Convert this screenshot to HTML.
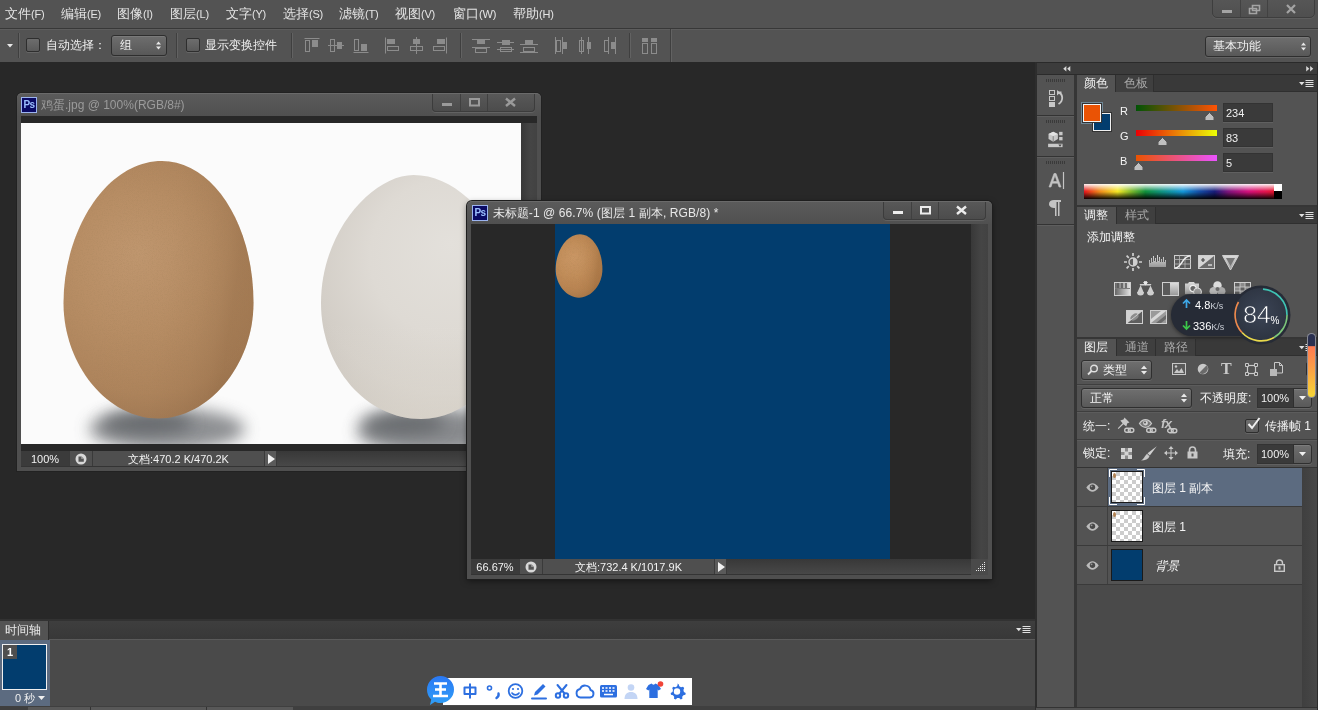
<!DOCTYPE html>
<html lang="zh">
<head>
<meta charset="utf-8">
<title>Photoshop</title>
<style>
*{box-sizing:border-box;margin:0;padding:0}
html,body{width:1318px;height:710px;overflow:hidden;background:#282828}
body{opacity:0.999;position:relative;font-family:"Liberation Sans",sans-serif;font-size:12px;color:#e6e6e6;line-height:1}
.a{position:absolute}
.t{position:absolute;white-space:nowrap;line-height:14px;height:14px}
svg{position:absolute;overflow:visible}
/* menubar */
#menubar{left:0;top:0;width:1318px;height:28px;background:#535353}
#menubar .t{top:7px;font-size:13px;color:#e4e4e4}
#menubar i{font-style:normal;font-size:11px;letter-spacing:-0.2px}
#optbar{left:0;top:28px;width:1318px;height:34px;background:#535353;border-top:1px solid #383838;box-shadow:inset 0 1px 0 #5d5d5d}
#optbar .t{font-size:12px;color:#f0f0f0}
.ic{fill:#8c8c8c;stroke:none}
.il{fill:none;stroke:#8c8c8c;stroke-width:1}
.sep{position:absolute;width:2px;top:6px;height:24px;border-left:1px solid #3f3f3f;border-right:1px solid #626262}
.cb{position:absolute;width:14px;height:14px;border:1px solid #2e2e2e;border-radius:2px;background:linear-gradient(#6d6d6d,#5a5a5a);box-shadow:0 1px 0 #666}
.dd{position:absolute;border:1px solid #2e2e2e;border-radius:3px;background:linear-gradient(#6e6e6e,#585858);box-shadow:0 1px 0 #636363, inset 0 1px 0 #7a7a7a}
/* doc windows */
.ps{position:absolute;left:4px;top:3px;width:16px;height:16px;background:#0a0a64;border:1px solid #9cb4f0;color:#9cc0ff;font-size:10px;font-weight:bold;line-height:13px;text-align:center;letter-spacing:-0.5px}
.field{position:absolute;background:#3a3a3a;border:1px solid #303030}
.panelhdr{position:absolute;background:#3a3a3a;border-top:1px solid #2a2a2a;border-bottom:1px solid #2e2e2e}
.tab{position:absolute;top:0;height:100%;font-size:12px}

.win{position:absolute;width:524px;height:378px;background:#4f4f4f;border-radius:5px 5px 0 0;box-shadow:0 0 0 1px rgba(30,30,30,.55)}
.wtitle{position:absolute;left:0;top:0;width:524px;height:23px;border-radius:5px 5px 0 0;background:linear-gradient(#5b5b5b,#505050);border-top:1px solid #6a6a6a}
.wtitle .t{left:24px;top:4px;font-size:12px}
.winner{position:absolute;left:4px;top:23px;width:516px;height:351px;background:#282828;overflow:hidden}
#win2 .stat{width:517px}
#win2 .wtitle .wbtn,#win2 .wtitle>.a,#win2 .wtitle>svg{margin-left:1px}
.vsb{position:absolute;left:500px;top:0;width:16px;height:335px;background:linear-gradient(90deg,#383838,#454545 60%,#424242)}
.stat{position:absolute;left:0;top:335px;width:516px;height:16px;background:linear-gradient(#383838,#484848);border-bottom:1px solid #343434}
.stat .d{position:absolute;left:72px;top:0;width:171px;height:15px;background:#4f4f4f}
.stat .t{top:1px;z-index:1;font-size:11px;color:#f2f2f2;text-align:center}
.stat .z{position:absolute;left:0;top:0;width:48px;height:15px;background:#3b3b3b}
.stat .b1{position:absolute;left:48px;top:0;width:24px;height:15px;background:#505050;border-left:1px solid #3a3a3a;border-right:1px solid #3a3a3a}
.stat .b2{position:absolute;left:243px;top:0;width:13px;height:15px;background:#5a5a5a;border-left:1px solid #3a3a3a;border-right:1px solid #3a3a3a}
.wbtn{position:absolute;top:0;height:18px;border:1px solid #3c3c3c;border-top:none;border-radius:0 0 4px 4px;background:linear-gradient(#585858,#4c4c4c);box-shadow:0 1px 0 #626262}

.pn{position:absolute;left:1077px;width:241px;background:#535353}
.tb{position:absolute;left:1077px;width:241px;height:17px;background:#393939;border-bottom:1px solid #2f2f2f}
.tb .on{position:absolute;top:0;height:18px;background:#535353;border-right:1px solid #2f2f2f;color:#f0f0f0;font-size:12px;line-height:16px;padding-left:7px}
.tb .off{position:absolute;top:0;height:17px;background:#3f3f3f;border-right:1px solid #2f2f2f;color:#a8a8a8;font-size:12px;line-height:16px;padding-left:8px}
.tb svg{left:222px;top:5px}
.grip{position:absolute;left:1046px;width:20px;height:3px;background:repeating-linear-gradient(90deg,#3a3a3a 0 1px,transparent 1px 2px)}
.hl{position:absolute;height:1px;background:#3e3e3e;box-shadow:0 1px 0 #5c5c5c}
.pt{position:absolute;white-space:nowrap;font-size:12px;line-height:14px;color:#f4f4f4}
.nf{position:absolute;background:#3a3a3a;border:1px solid #333;box-shadow:0 1px 0 #606060;color:#f0f0f0;font-size:11px;line-height:19px;padding-left:2px}

.dd2{position:absolute;border:1px solid #2f2f2f;border-radius:3px;background:linear-gradient(#6f6f6f,#595959);box-shadow:0 1px 0 #656565, inset 0 1px 0 #7c7c7c}
.lrow{position:absolute;left:1077px;width:225px;height:39px;background:#535353;border-bottom:1px solid #3a3a3a}
.lrow .eyec{position:absolute;left:0;top:0;width:31px;height:38px;border-right:1px solid #3f3f3f;background:#535353}
.thumb{position:absolute;left:34px;top:3px;width:32px;height:32px;border:1px solid #1a1a1a;background-color:#fff;background-image:linear-gradient(45deg,#ccc 25%,transparent 25%,transparent 75%,#ccc 75%),linear-gradient(45deg,#ccc 25%,transparent 25%,transparent 75%,#ccc 75%);background-size:8px 8px;background-position:0 0,4px 4px}
</style>
</head>
<body>

<!-- ===== MENU BAR ===== -->
<div id="menubar" class="a">
  <span class="t" style="left:5px">文件<i>(F)</i></span>
  <span class="t" style="left:61px">编辑<i>(E)</i></span>
  <span class="t" style="left:117px">图像<i>(I)</i></span>
  <span class="t" style="left:170px">图层<i>(L)</i></span>
  <span class="t" style="left:226px">文字<i>(Y)</i></span>
  <span class="t" style="left:283px">选择<i>(S)</i></span>
  <span class="t" style="left:339px">滤镜<i>(T)</i></span>
  <span class="t" style="left:395px">视图<i>(V)</i></span>
  <span class="t" style="left:453px">窗口<i>(W)</i></span>
  <span class="t" style="left:513px">帮助<i>(H)</i></span>

  <div class="a" style="left:1212px;top:-1px;width:103px;height:19px;border:1px solid #3e3e3e;border-radius:0 0 5px 5px;background:linear-gradient(#565656,#4f4f4f);box-shadow:0 1px 0 #5e5e5e"></div>
  <div class="a" style="left:1240px;top:0;width:1px;height:17px;background:#424242"></div>
  <div class="a" style="left:1267px;top:0;width:1px;height:17px;background:#424242"></div>
  <svg style="left:1212px;top:0" width="103" height="18" viewBox="0 0 103 18">
    <rect x="10" y="10" width="10" height="3" fill="#a4a4a4"/>
    <path d="M40.5 5.5h7v5h-7z M37.5 8.5h7v5h-7z" fill="none" stroke="#a4a4a4" stroke-width="1.6"/>
    <path d="M75 5l8 8M83 5l-8 8" stroke="#a4a4a4" stroke-width="2.2" fill="none"/>
  </svg>
</div>

<!-- ===== OPTIONS BAR ===== -->
<div id="optbar" class="a">
  <svg style="left:7px;top:15px" width="6" height="4" viewBox="0 0 6 4"><path d="M0 0h6l-3 3.500z" fill="#e8e8e8"/></svg>
  <div class="sep" style="left:18px;top:4px;height:25px"></div>
  <div class="cb" style="left:26px;top:9px"></div>
  <span class="t" style="left:46px;top:9px">自动选择：</span>
  <div class="dd" style="left:111px;top:6px;width:56px;height:21px"></div>
  <span class="t" style="left:120px;top:9px">组</span>
  <svg style="left:156px;top:12px" width="5" height="9" viewBox="0 0 5 9"><path d="M0 3.500l2.500-3 2.500 3zM0 5.500l2.500 3 2.500-3z" fill="#e8e8e8"/></svg>
  <div class="sep" style="left:176px;top:4px;height:25px"></div>
  <div class="cb" style="left:186px;top:9px"></div>
  <span class="t" style="left:205px;top:9px">显示变换控件</span>
  <div class="sep" style="left:291px;top:4px;height:25px"></div>
  <svg style="left:304px;top:8px" width="18" height="18" viewBox="0 0 18 18"><path class="il" d="M0.5 1.5h15"/><rect class="il" x="1.5" y="3.5" width="4" height="11"/><rect class="ic" x="8" y="3" width="6" height="7"/></svg>
  <svg style="left:328px;top:8px" width="18" height="18" viewBox="0 0 18 18"><path class="il" d="M0 8.5h16"/><rect class="il" x="2.5" y="2.5" width="4" height="12" fill="#535353"/><rect class="ic" x="9" y="5" width="5" height="7"/></svg>
  <svg style="left:353px;top:8px" width="18" height="18" viewBox="0 0 18 18"><path class="il" d="M0.5 15.5h15"/><rect class="il" x="1.5" y="2.5" width="4" height="11"/><rect class="ic" x="8" y="7" width="6" height="7"/></svg>
  <svg style="left:384px;top:8px" width="18" height="18" viewBox="0 0 18 18"><path class="il" d="M1.5 0.5v16"/><rect class="ic" x="3" y="2" width="8" height="5"/><rect class="il" x="3.5" y="9.5" width="11" height="4"/></svg>
  <svg style="left:409px;top:8px" width="18" height="18" viewBox="0 0 18 18"><path class="il" d="M7.5 0v17"/><rect class="ic" x="4" y="2" width="7" height="5"/><rect class="il" x="1.5" y="9.5" width="12" height="4" fill="#535353"/></svg>
  <svg style="left:432px;top:8px" width="18" height="18" viewBox="0 0 18 18"><path class="il" d="M14.5 0.5v16"/><rect class="ic" x="5" y="2" width="8" height="5"/><rect class="il" x="1.5" y="9.5" width="11" height="4"/></svg>
  <svg style="left:472px;top:8px" width="18" height="18" viewBox="0 0 18 18"><path class="il" d="M0 2.5h18M0 10.5h18"/><rect class="ic" x="5" y="3" width="8" height="4"/><rect class="il" x="3.5" y="11.5" width="11" height="4"/></svg>
  <svg style="left:497px;top:8px" width="18" height="18" viewBox="0 0 18 18"><path class="il" d="M0 5.5h17M0 12.5h17"/><rect class="ic" x="5" y="3" width="8" height="5"/><rect class="il" x="3.5" y="10.5" width="11" height="4" fill="#535353"/></svg>
  <svg style="left:520px;top:8px" width="18" height="18" viewBox="0 0 18 18"><path class="il" d="M0 7.5h18M0 15.5h18"/><rect class="ic" x="5" y="3" width="8" height="4"/><rect class="il" x="3.5" y="10.5" width="11" height="4"/></svg>
  <svg style="left:553px;top:8px" width="18" height="18" viewBox="0 0 18 18"><path class="il" d="M2.5 0v17M9.5 0v17"/><rect class="il" x="3.5" y="3.5" width="4" height="11"/><rect class="ic" x="10" y="5" width="4" height="7"/></svg>
  <svg style="left:577px;top:8px" width="18" height="18" viewBox="0 0 18 18"><path class="il" d="M4.5 0v17M11.5 0v17"/><rect class="il" x="2.5" y="3.5" width="4" height="11" fill="#535353"/><rect class="ic" x="10" y="5" width="4" height="7"/></svg>
  <svg style="left:601px;top:8px" width="18" height="18" viewBox="0 0 18 18"><path class="il" d="M7.5 0v17M14.5 0v17"/><rect class="il" x="3.5" y="3.5" width="4" height="11"/><rect class="ic" x="10" y="5" width="4" height="7"/></svg>
  <svg style="left:641px;top:8px" width="18" height="18" viewBox="0 0 18 18"><rect class="ic" x="1" y="1" width="6" height="4"/><rect class="ic" x="10" y="1" width="6" height="4"/><rect class="il" x="1.5" y="6.5" width="5" height="10"/><rect class="il" x="10.5" y="6.5" width="5" height="10"/></svg>
  <div class="sep" style="left:460px;top:4px;height:25px"></div>
  <div class="sep" style="left:629px;top:4px;height:25px"></div>
  <div class="sep" style="left:670px;top:0;height:33px"></div>
  <div class="dd" style="left:1205px;top:7px;width:106px;height:21px"></div>
  <span class="t" style="left:1213px;top:10px">基本功能</span>
  <svg style="left:1301px;top:13px" width="5" height="9" viewBox="0 0 5 9"><path d="M0 3.500l2.500-3 2.500 3zM0 5.500l2.500 3 2.500-3z" fill="#e8e8e8"/></svg>
</div>

<!-- ===== WORKSPACE ===== -->
<div id="work" class="a" style="left:0;top:62px;width:1035px;height:558px;background:#282828"></div>

<!-- ===== WINDOW 1 ===== -->
<div id="win1" class="win" style="left:17px;top:93px">
  <div class="wtitle"><div class="ps">Ps</div><span class="t" style="color:#9b9b9b">鸡蛋.jpg @ 100%(RGB/8#)</span>
    <div class="wbtn" style="left:415px;width:103px"></div>
    <div class="a" style="left:443px;top:0;width:1px;height:17px;background:#404040"></div>
    <div class="a" style="left:470px;top:0;width:1px;height:17px;background:#404040"></div>
    <svg style="left:416px;top:0" width="102" height="19" viewBox="0 0 102 19">
      <rect x="9" y="9" width="10" height="3" fill="#9a9a9a"/>
      <rect x="37" y="5" width="9" height="6.500" fill="none" stroke="#9a9a9a" stroke-width="2"/>
      <path d="M73 4.500l9 7.500M82 4.500l-9 7.500" stroke="#9a9a9a" stroke-width="2.400" fill="none"/>
    </svg>
  </div>
  <div class="winner">
    <svg style="left:0;top:7px" width="500" height="321" viewBox="0 0 500 321">
      <defs>
        <radialGradient id="gBrown" gradientUnits="userSpaceOnUse" cx="130" cy="155" r="170" fx="118" fy="130">
          <stop offset="0" stop-color="#c0976f"/><stop offset="0.4" stop-color="#b88e65"/><stop offset="0.72" stop-color="#ae845c"/><stop offset="0.9" stop-color="#a07853"/><stop offset="1" stop-color="#906a47"/>
        </radialGradient>
        <linearGradient id="gBrownB" gradientUnits="userSpaceOnUse" x1="100" y1="0" x2="236" y2="20">
          <stop offset="0" stop-color="#6a4524" stop-opacity="0"/><stop offset="0.5" stop-color="#6a4524" stop-opacity="0.02"/><stop offset="0.75" stop-color="#6a4524" stop-opacity="0.07"/><stop offset="0.9" stop-color="#6a4524" stop-opacity="0.13"/><stop offset="1" stop-color="#6a4524" stop-opacity="0.2"/>
        </linearGradient>
        <radialGradient id="gWhite" gradientUnits="userSpaceOnUse" cx="420" cy="150" r="170" fx="430" fy="120">
          <stop offset="0" stop-color="#e3e0db"/><stop offset="0.45" stop-color="#dedad4"/><stop offset="0.75" stop-color="#d3cec7"/><stop offset="1" stop-color="#c3bdb5"/>
        </radialGradient>
        <linearGradient id="gWhiteB" gradientUnits="userSpaceOnUse" x1="0" y1="200" x2="0" y2="300">
          <stop offset="0" stop-color="#e8e4dc" stop-opacity="0"/><stop offset="1" stop-color="#efeadf" stop-opacity="0.35"/>
        </linearGradient>
        <filter id="blur8" x="-40%" y="-100%" width="180%" height="300%"><feGaussianBlur stdDeviation="8"/></filter>
        <filter id="blur4" x="-40%" y="-100%" width="180%" height="300%"><feGaussianBlur stdDeviation="4"/></filter>
        <filter id="soft" x="-5%" y="-5%" width="110%" height="110%"><feGaussianBlur stdDeviation="0.6"/></filter>
        <filter id="speck" x="0" y="0" width="100%" height="100%">
          <feTurbulence type="fractalNoise" baseFrequency="0.8" numOctaves="2" seed="3" result="n"/>
          <feColorMatrix in="n" type="matrix" values="0 0 0 0 0.35  0 0 0 0 0.22  0 0 0 0 0.10  0 0 0 -1.8 1.0"/>
          <feComposite in2="SourceGraphic" operator="in"/>
        </filter>
        <path id="eggB" d="M141 38 C191 38 232.5 100 232.5 180 C232.5 242.500 187 295.500 137 295.500 C87 295.500 42.5 242.500 42.5 180 C42.5 108 85 38 141 38Z"/>
        <g id="brownEgg">
          <use href="#eggB" fill="url(#gBrown)"/>
          <use href="#eggB" fill="url(#gBrownB)"/>
          <use href="#eggB" fill="#000" filter="url(#speck)" opacity="0.3"/>
        </g>
        <path id="eggW" d="M392.5 52 C445 52 492 115 492 182 C492 245 452 296 400 296 C346 296 300 245 300 180 C300 108 352 52 392.5 52Z"/>
      </defs>
      <rect width="500" height="321" fill="#fbfbfb"/>
      <g style="overflow:hidden"><clipPath id="cv1"><rect width="500" height="321"/></clipPath></g>
      <g clip-path="url(#cv1)">
        <ellipse cx="146" cy="306" rx="78" ry="21" fill="#707276" opacity="0.78" filter="url(#blur8)"/>
        <ellipse cx="126" cy="300" rx="46" ry="12" fill="#505256" opacity="0.6" filter="url(#blur8)"/>
        <ellipse cx="412" cy="308" rx="76" ry="23" fill="#707276" opacity="0.82" filter="url(#blur8)"/>
        <ellipse cx="382" cy="300" rx="42" ry="12" fill="#505256" opacity="0.55" filter="url(#blur8)"/>
        <use href="#brownEgg"/>
        <use href="#eggW" fill="url(#gWhite)"/>
        <use href="#eggW" fill="url(#gWhiteB)"/>
      </g>
    </svg>
    <div class="vsb" style="top:7px;height:328px"></div>
    <div class="stat">
      <div class="z"></div><span class="t" style="left:0;width:48px">100%</span>
      <div class="b1"></div><div class="d"></div>
      <svg style="left:54px;top:2px" width="12" height="12" viewBox="0 0 12 12"><circle cx="6" cy="6" r="5.5" fill="#d8d8d8"/><path d="M3.5 3.5h3v2.2h2.3v3H3.5z" fill="#555"/><path d="M6.5 3.2l2.6 2.5H6.5z" fill="#888"/></svg>
      <span class="t" style="left:72px;width:171px">文档:470.2 K/470.2K</span>
      <div class="b2"></div>
      <svg style="left:247px;top:3px" width="7" height="10" viewBox="0 0 7 10"><path d="M0 0l7 5-7 5z" fill="#f0f0f0"/></svg>
    </div>
  </div>
</div>

<!-- ===== WINDOW 2 ===== -->
<div id="win2" class="win" style="left:467px;top:201px;width:525px;box-shadow:0 0 0 1px #1e1e1e,0 2px 6px rgba(0,0,0,.5)">
  <div class="wtitle" style="width:525px"><div class="ps" style="left:5px">Ps</div><span class="t" style="color:#e8e8e8;left:25.5px;letter-spacing:0.1px">未标题-1 @ 66.7% (图层 1 副本, RGB/8) *</span>
    <div class="wbtn" style="left:415px;width:103px"></div>
    <div class="a" style="left:443px;top:0;width:1px;height:17px;background:#404040"></div>
    <div class="a" style="left:470px;top:0;width:1px;height:17px;background:#404040"></div>
    <svg style="left:416px;top:0" width="102" height="19" viewBox="0 0 102 19">
      <rect x="9" y="9" width="10" height="3" fill="#ececec"/>
      <rect x="37" y="5" width="9" height="6.500" fill="none" stroke="#ececec" stroke-width="2"/>
      <path d="M73 4.500l9 7.500M82 4.500l-9 7.500" stroke="#ececec" stroke-width="2.400" fill="none"/>
    </svg>
  </div>
  <div class="winner" style="width:517px">
    <div class="a" style="left:84px;top:0;width:335px;height:335px;background:#023d6e"></div>
    <svg style="left:73.500px;top:1px;filter:saturate(1.180) contrast(1.060)" width="70" height="74.500" viewBox="0 0 283 303"><use href="#brownEgg"/></svg>
    <div class="vsb" style="left:500px;width:17px"></div>
    <div class="a" style="left:500px;top:335px;width:17px;height:16px;background:#4a4a4a;z-index:2"></div><div style="position:absolute;left:0;top:0;z-index:3"><svg style="left:505px;top:338px" width="11" height="11" viewBox="0 0 11 11"><g fill="#e8e8e8"><rect x="8" y="0" width="1" height="1"/><rect x="6" y="2" width="1" height="1"/><rect x="8" y="2" width="1" height="1"/><rect x="4" y="4" width="1" height="1"/><rect x="6" y="4" width="1" height="1"/><rect x="8" y="4" width="1" height="1"/><rect x="2" y="6" width="1" height="1"/><rect x="4" y="6" width="1" height="1"/><rect x="6" y="6" width="1" height="1"/><rect x="8" y="6" width="1" height="1"/><rect x="0" y="8" width="1" height="1"/><rect x="2" y="8" width="1" height="1"/><rect x="4" y="8" width="1" height="1"/><rect x="6" y="8" width="1" height="1"/><rect x="8" y="8" width="1" height="1"/></g></svg></div>
    <div class="stat">
      <div class="z"></div><span class="t" style="left:0;width:48px">66.67%</span>
      <div class="b1"></div><div class="d"></div>
      <svg style="left:54px;top:2px" width="12" height="12" viewBox="0 0 12 12"><circle cx="6" cy="6" r="5.5" fill="#d8d8d8"/><path d="M3.5 3.5h3v2.2h2.3v3H3.5z" fill="#555"/><path d="M6.5 3.2l2.6 2.5H6.5z" fill="#888"/></svg>
      <span class="t" style="left:72px;width:171px">文档:732.4 K/1017.9K</span>
      <div class="b2"></div>
      <svg style="left:247px;top:3px" width="7" height="10" viewBox="0 0 7 10"><path d="M0 0l7 5-7 5z" fill="#f0f0f0"/></svg>
    </div>
  </div>
</div>

<!-- ===== RIGHT DOCK ===== -->
<div id="dock" class="a" style="left:1035px;top:62px;width:283px;height:648px;background:#363636;border-left:2px solid #2d2d2d;border-top:1px solid #2a2a2a"></div>
<!-- dock header -->
<div class="a" style="left:1037px;top:63px;width:281px;height:11px;background:#3c3c3c"></div>
<div class="a" style="left:1037px;top:74px;width:281px;height:1px;background:#2b2b2b"></div>
<svg style="left:1063px;top:66px" width="7.500" height="5.500" viewBox="0 0 9 7"><path d="M4 0v7L0 3.5zM9 0v7L5 3.5z" fill="#d8d8d8"/></svg>
<svg style="left:1306px;top:66px" width="7.500" height="5.500" viewBox="0 0 9 7"><path d="M0 0v7l4-3.500zM5 0v7l4-3.500z" fill="#d8d8d8"/></svg>
<!-- icon column -->
<div class="a" style="left:1037px;top:75px;width:37px;height:635px;background:#535353"></div>
<div class="a" style="left:1037px;top:115px;width:37px;height:1px;background:#333;box-shadow:0 1px 0 #5e5e5e"></div>
<div class="a" style="left:1037px;top:156px;width:37px;height:1px;background:#333;box-shadow:0 1px 0 #5e5e5e"></div>
<div class="a" style="left:1037px;top:224px;width:37px;height:1px;background:#333;box-shadow:0 1px 0 #5e5e5e"></div>
<div class="grip" style="top:79px"></div>
<div class="grip" style="top:120px"></div>
<div class="grip" style="top:161px"></div>
<!-- history icon -->
<svg style="left:1049px;top:89px" width="17" height="18" viewBox="0 0 17 18">
  <rect x="0.5" y="1.500" width="5" height="4" fill="none" stroke="#c8c8c8"/><rect x="0.5" y="7.500" width="5" height="4" fill="none" stroke="#c8c8c8"/><rect x="0" y="13" width="6" height="5" fill="#c8c8c8"/>
  <path d="M8.500 3.500h4 M9 3.500c5 1 6 8 0.500 11.500" fill="none" stroke="#c8c8c8" stroke-width="1.800"/><path d="M8 1v5.500l3-2.700z" fill="#c8c8c8"/>
</svg>
<!-- properties / 3d icon -->
<svg style="left:1048px;top:130.500px" width="15.500" height="17" viewBox="0 0 18 20">
  <path d="M6 1l5.500 2.500v6L6 12.500 0.500 9.500v-6z" fill="#c8c8c8"/><path d="M6 1l5.500 2.500L6 6 0.500 3.500z" fill="#e4e4e4"/><path d="M6 6v6.500" stroke="#777" stroke-width="1"/>
  <rect x="13" y="1" width="4" height="4" fill="#c8c8c8"/><rect x="13" y="7" width="4" height="4" fill="#c8c8c8"/>
  <rect x="0" y="15" width="17" height="4" fill="#c8c8c8"/><path d="M12 16h4l-2 2.500z" fill="#444"/>
</svg>
<!-- character icon -->
<svg style="left:1049px;top:172px" width="16" height="18" viewBox="0 0 16 18"><path d="M0 15L5 1.500h2L12 15h-2l-1.300-3.800H3.300L2 15zM3.900 9.500h4.200L6 3.500z" fill="#c4c4c4" stroke="#c4c4c4" stroke-width="0.600"/><path d="M14.500 0v17" stroke="#c4c4c4" stroke-width="1.200"/></svg>
<!-- paragraph icon -->
<svg style="left:1049px;top:200px" width="12" height="16" viewBox="0 0 12 16"><path d="M5 0h7v2h-1.500v14H9V2H7.500v14H6V8C2.500 8 0 6.500 0 4S2 0 5 0z" fill="#c4c4c4"/></svg>

<!-- COLOR PANEL -->
<div class="tb" style="top:75px"><div class="on" style="left:0;width:39px">颜色</div><div class="off" style="left:39px;width:38px">色板</div><svg width="15" height="8" viewBox="0 0 15 8"><path d="M0 2h5.500l-2.750 3.200z" fill="#e0e0e0"/><path d="M6.500 0.500h8M6.500 2.500h8M6.500 4.500h8M6.500 6.500h8" stroke="#e0e0e0" stroke-width="1"/></svg></div>
<div class="pn" style="top:92px;height:113px"></div>
<div class="a" style="left:1081px;top:102px;width:22px;height:22px;border:1px solid #6f8796"></div>
<div class="a" style="left:1093px;top:113px;width:18px;height:18px;background:#023d6e;border:1px solid #f0f0f0;box-shadow:0 0 0 1px #333"></div>
<div class="a" style="left:1083px;top:104px;width:18px;height:18px;background:#ea5305;border:1px solid #f4f4f4;box-shadow:0 0 0 1px #333"></div>
<span class="pt" style="left:1120px;top:104px;font-size:11px">R</span>
<span class="pt" style="left:1120px;top:129px;font-size:11px">G</span>
<span class="pt" style="left:1120px;top:154px;font-size:11px">B</span>
<div class="a" style="left:1136px;top:105px;width:81px;height:6px;background:linear-gradient(90deg,#005305,#ff5305)"></div>
<div class="a" style="left:1136px;top:130px;width:81px;height:6px;background:linear-gradient(90deg,#ea0005,#eaff05)"></div>
<div class="a" style="left:1136px;top:155px;width:81px;height:6px;background:linear-gradient(90deg,#ea5300,#ea53ff)"></div>
<svg style="left:1204px;top:112px" width="11" height="9" viewBox="0 0 11 9"><path d="M5.500 0.500L10 5v3.500H1V5z" fill="#c0c0c0" stroke="#555" stroke-width="1"/></svg>
<svg style="left:1157px;top:137px" width="11" height="9" viewBox="0 0 11 9"><path d="M5.500 0.500L10 5v3.500H1V5z" fill="#c0c0c0" stroke="#555" stroke-width="1"/></svg>
<svg style="left:1133px;top:162px" width="11" height="9" viewBox="0 0 11 9"><path d="M5.500 0.500L10 5v3.500H1V5z" fill="#c0c0c0" stroke="#555" stroke-width="1"/></svg>
<div class="nf" style="left:1223px;top:103px;width:50px;height:19px">234</div>
<div class="nf" style="left:1223px;top:128px;width:50px;height:19px">83</div>
<div class="nf" style="left:1223px;top:153px;width:50px;height:19px">5</div>
<div class="a" style="left:1084px;top:184px;width:198px;height:15px;background:linear-gradient(rgba(255,255,255,.95) 0,rgba(255,255,255,0) 48%,rgba(0,0,0,0) 52%,rgba(0,0,0,.95) 100%),linear-gradient(90deg,#e8141c 0,#f08c1c 8%,#f4e824 17%,#7cb82c 24%,#10903c 31%,#109488 40%,#1496d8 50%,#1450a8 58%,#181c78 66%,#80147c 73%,#d4107c 83%,#e4144c 92%,#e4141c 98%)"></div>
<div class="a" style="left:1274px;top:184px;width:8px;height:7px;background:#fff"></div>
<div class="a" style="left:1274px;top:191px;width:8px;height:8px;background:#000"></div>

<!-- ADJUSTMENTS PANEL -->
<div class="tb" style="top:207px"><div class="on" style="left:0;width:40px">调整</div><div class="off" style="left:40px;width:39px">样式</div><svg width="15" height="8" viewBox="0 0 15 8"><path d="M0 2h5.500l-2.750 3.200z" fill="#e0e0e0"/><path d="M6.500 0.500h8M6.500 2.500h8M6.500 4.500h8M6.500 6.500h8" stroke="#e0e0e0" stroke-width="1"/></svg></div>
<div class="pn" style="top:224px;height:113px"></div>
<span class="pt" style="left:1087px;top:230px">添加调整</span>

<svg width="0" height="0" style="left:0;top:0"><defs><linearGradient id="ag" x1="0" y1="0" x2="0" y2="1"><stop offset="0" stop-color="#dcdcdc"/><stop offset="1" stop-color="#9a9a9a"/></linearGradient><linearGradient id="agh" x1="0" y1="0" x2="1" y2="0"><stop offset="0" stop-color="#666"/><stop offset="1" stop-color="#e0e0e0"/></linearGradient></defs></svg>
<!-- row 1 -->
<svg style="left:1124px;top:253px" width="18" height="18" viewBox="0 0 18 18"><circle cx="9" cy="9" r="4" fill="#5c5c5c" stroke="#d0d0d0" stroke-width="1.4"/><path d="M9 5a4 4 0 0 1 0 8z" fill="#d0d0d0"/><path d="M9 0v3M9 15v3M0 9h3M15 9h3M2.600 2.600l2.200 2.200M13.200 13.200l2.200 2.200M2.600 15.400l2.200-2.200M13.200 4.800l2.200-2.200" stroke="#d0d0d0" stroke-width="1.700"/></svg>
<svg style="left:1149px;top:255px" width="18" height="13" viewBox="0 0 18 13"><path d="M0 12V5h1v3h1V3h1v4h1V1h1v5h1V3h1v4h1V0h1v6h1V2h1v5h1V4h1v3h1V2h1v5h1V5h1v7z" fill="url(#ag)"/></svg>
<svg style="left:1174px;top:255px" width="17" height="14" viewBox="0 0 17 14"><rect x="0.500" y="0.500" width="16" height="13" fill="#5a5a5a" stroke="#cfcfcf"/><path d="M0 4.500h17M0 9h17M5.500 0v14M11 0v14" stroke="#b8b8b8" stroke-width="0.800"/><path d="M1 13c7 0 7-12 15-12" fill="none" stroke="#f0f0f0" stroke-width="1.500"/></svg>
<svg style="left:1198px;top:255px" width="17" height="14" viewBox="0 0 17 14"><rect x="0.500" y="0.500" width="16" height="13" fill="#6a6a6a" stroke="#cfcfcf"/><path d="M1 1h15L1 13z" fill="#d4d4d4"/><path d="M3 5h4M5 3v4" stroke="#444" stroke-width="1.200"/><path d="M10 10h4" stroke="#eee" stroke-width="1.200"/></svg>
<svg style="left:1222px;top:255px" width="17" height="16" viewBox="0 0 17 16"><path d="M0.500 0.500h16L8.500 15z" fill="url(#ag)" stroke="#d0d0d0"/><path d="M4 3h9L8.500 11z" fill="#777"/></svg>
<!-- row 2 -->
<svg style="left:1114px;top:282px" width="17" height="14" viewBox="0 0 17 14"><rect x="0.500" y="0.500" width="16" height="13" fill="#7a7a7a" stroke="#cfcfcf"/><rect x="1" y="1" width="15" height="5" fill="url(#agh)"/><path d="M4 1v5M8 1v5M12 1v5" stroke="#555" stroke-width="1.500"/><rect x="1" y="7" width="15" height="6" fill="url(#agh)"/></svg>
<svg style="left:1136px;top:281px" width="19" height="16" viewBox="0 0 19 16"><path d="M8 0h3v3h4.500l-1 1.500L17.500 11h-6l3-6.500H4.800L7.500 11h-6l3-6.500-1-1.500H8z" fill="#cfcfcf"/><path d="M1 11h7a3.500 3.500 0 0 1-7 0zM11 11h7a3.500 3.500 0 0 1-7 0z" fill="#cfcfcf"/><path d="M7 1h5l-2.500 3.500z" fill="#e8e8e8"/></svg>
<svg style="left:1162px;top:282px" width="17" height="14" viewBox="0 0 17 14"><rect x="0.500" y="0.500" width="16" height="13" fill="#5a5a5a" stroke="#cfcfcf"/><rect x="8" y="1" width="8" height="12" fill="url(#ag)"/></svg>
<svg style="left:1185px;top:281px" width="17" height="15" viewBox="0 0 17 15"><path d="M0 2.500h3L4 1h5l1 1.500h4V13H0z" fill="url(#ag)"/><circle cx="8" cy="7.500" r="3.200" fill="#666" stroke="#eee" stroke-width="1.200"/><circle cx="12.500" cy="11" r="4" fill="#999" stroke="#ddd" stroke-width="1"/></svg>
<svg style="left:1209px;top:281px" width="17" height="15" viewBox="0 0 17 15"><circle cx="8.500" cy="4.500" r="4.200" fill="#dcdcdc"/><circle cx="4.700" cy="10.300" r="4.200" fill="#b8b8b8"/><circle cx="12.300" cy="10.300" r="4.200" fill="#a8a8a8"/><circle cx="8.500" cy="8" r="2" fill="#6a6a6a"/></svg>
<svg style="left:1234px;top:282px" width="17" height="14" viewBox="0 0 17 14"><rect x="0.500" y="0.500" width="16" height="13" fill="#8a8a8a" stroke="#cfcfcf"/><path d="M1 1h5v4H1zM11 1h5v4h-5zM6 5h5v4H6zM1 9h5v4H1zM11 9h5v4h-5z" fill="#606060"/><path d="M6 0v14M11 0v14M0 5h17M0 9h17" stroke="#cfcfcf" stroke-width="0.800"/></svg>
<!-- row 3 -->
<svg style="left:1126px;top:310px" width="17" height="14" viewBox="0 0 17 14"><rect x="0.500" y="0.500" width="16" height="13" fill="#d2d2d2" stroke="#cfcfcf"/><path d="M1 13L16 1V13z" fill="#5e5e5e"/><ellipse cx="8.500" cy="7" rx="4.500" ry="3" transform="rotate(-38 8.500 7)" fill="#8c8c8c"/><path d="M1 13L16 1" stroke="#ddd" stroke-width="0.800"/></svg>
<svg style="left:1150px;top:310px" width="17" height="14" viewBox="0 0 17 14"><rect x="0.500" y="0.500" width="16" height="13" fill="#9a9a9a" stroke="#cfcfcf"/><path d="M1 9L11 1h5L1 13z" fill="#d8d8d8"/><path d="M6 13L16 5v4l-5 4z" fill="#6a6a6a"/></svg>
<svg style="left:1174px;top:310px" width="17" height="14" viewBox="0 0 17 14"><rect x="0.500" y="0.500" width="16" height="13" fill="#5e5e5e" stroke="#cfcfcf"/><path d="M1 13V9h5V5h5V1h5v12z" fill="#d0d0d0"/></svg>
<svg style="left:1198px;top:310px" width="17" height="14" viewBox="0 0 17 14"><rect x="0.500" y="0.500" width="16" height="13" fill="url(#agh)" stroke="#cfcfcf"/></svg>
<svg style="left:1222px;top:310px" width="17" height="14" viewBox="0 0 17 14"><rect x="0.500" y="0.500" width="16" height="13" fill="#6a6a6a" stroke="#cfcfcf"/><path d="M1 1h15L1 13z" fill="#ccc"/></svg>

<!-- LAYERS PANEL -->
<div class="tb" style="top:339px"><div class="on" style="left:0;width:40px">图层</div><div class="off" style="left:40px;width:39px">通道</div><div class="off" style="left:79px;width:40px">路径</div><svg width="15" height="8" viewBox="0 0 15 8"><path d="M0 2h5.500l-2.750 3.200z" fill="#e0e0e0"/><path d="M6.500 0.500h8M6.500 2.500h8M6.500 4.500h8M6.500 6.500h8" stroke="#e0e0e0" stroke-width="1"/></svg></div>
<div class="pn" style="top:356px;height:354px"></div>

<!-- filter row -->
<div class="dd2" style="left:1081px;top:360px;width:71px;height:20px"></div>
<svg style="left:1087px;top:364px" width="12" height="12" viewBox="0 0 12 12"><circle cx="7" cy="4.500" r="3.300" fill="none" stroke="#e0e0e0" stroke-width="1.400"/><path d="M4.500 7L1 10.500" stroke="#e0e0e0" stroke-width="1.800"/></svg>
<span class="pt" style="left:1103px;top:363px">类型</span>
<svg style="left:1141px;top:365px" width="6" height="10" viewBox="0 0 6 10"><path d="M0 4l3-3.500L6 4zM0 6l3 3.500L6 6z" fill="#e8e8e8"/></svg>
<svg style="left:1172px;top:363px" width="14" height="12" viewBox="0 0 14 12"><rect x="0.500" y="0.500" width="13" height="11" fill="#5a5a5a" stroke="#c8c8c8"/><path d="M2 10l3-4 2 2.500 2.500-3.500L12 10z" fill="#c8c8c8"/><circle cx="4" cy="3.500" r="1.200" fill="#c8c8c8"/></svg>
<svg style="left:1197px;top:363px" width="12" height="12" viewBox="0 0 12 12"><circle cx="6" cy="6" r="5.300" fill="#c8c8c8"/><path d="M2.300 9.700A5.300 5.300 0 0 0 9.700 2.300z" fill="#6a6a6a"/></svg>
<span class="pt" style="left:1221px;top:360px;font-family:'Liberation Serif',serif;font-size:16px;line-height:18px;color:#c8c8c8;font-weight:bold">T</span>
<svg style="left:1245px;top:363px" width="13" height="13" viewBox="0 0 13 13"><rect x="2.500" y="2.500" width="8" height="8" fill="none" stroke="#c8c8c8" stroke-width="1.200"/><path d="M0.500 0.500h3v3h-3zM9.500 0.500h3v3h-3zM0.500 9.500h3v3h-3zM9.500 9.500h3v3h-3z" fill="#535353" stroke="#c8c8c8" stroke-width="1"/></svg>
<svg style="left:1270px;top:362px" width="13" height="14" viewBox="0 0 13 14"><path d="M4.500 0.500h5l3 3V11h-8z" fill="#535353" stroke="#c8c8c8"/><path d="M9.500 0.500v3h3" fill="none" stroke="#c8c8c8"/><rect x="0" y="7" width="7" height="7" fill="#b8b8b8"/></svg>
<div class="a" style="left:1306px;top:362px;width:5px;height:14px;background:#3a3a3a;border:1px solid #2c2c2c;border-radius:2px"></div>
<div class="hl" style="left:1077px;top:384px;width:241px"></div>
<!-- blend row -->
<div class="dd2" style="left:1081px;top:388px;width:111px;height:20px"></div>
<span class="pt" style="left:1090px;top:391px">正常</span>
<svg style="left:1181px;top:393px" width="6" height="10" viewBox="0 0 6 10"><path d="M0 4l3-3.500L6 4zM0 6l3 3.500L6 6z" fill="#e8e8e8"/></svg>
<span class="pt" style="left:1200px;top:391px">不透明度:</span>
<div class="nf" style="left:1257px;top:388px;width:37px;height:20px;line-height:18px;padding-left:3px">100%</div>
<div class="dd2" style="left:1293px;top:388px;width:19px;height:20px;border-radius:0 3px 3px 0"></div>
<svg style="left:1299px;top:396px" width="7" height="4" viewBox="0 0 7 4"><path d="M0 0h7L3.500 4z" fill="#f0f0f0"/></svg>
<div class="hl" style="left:1077px;top:411px;width:241px"></div>
<!-- unify row -->
<span class="pt" style="left:1083px;top:419px">统一:</span>
<svg style="left:1117px;top:417px" width="18" height="17" viewBox="0 0 18 17"><path d="M7.500 0.500l5 5-2.200 0.800-1 3.200-2.800-2.300L1.500 12 0.800 11.200l4.800-5-2.300-2.800 3.200-1z" fill="#c8c8c8"/><rect x="7.700" y="11.200" width="5.500" height="4" rx="2" fill="none" stroke="#c8c8c8" stroke-width="1.400"/><rect x="11.300" y="11.200" width="5.500" height="4" rx="2" fill="none" stroke="#c8c8c8" stroke-width="1.400"/></svg>
<svg style="left:1139px;top:419px" width="18" height="15" viewBox="0 0 18 15"><path d="M0.500 4.500C2.500 1.500 4.500 0.700 6.500 0.700S10.500 1.500 12.500 4.500C10.500 7.500 8.500 8.300 6.500 8.300S2.500 7.500 0.500 4.500z" fill="#777" stroke="#c8c8c8" stroke-width="1.300"/><circle cx="6.500" cy="4" r="2.400" fill="#d0d0d0"/><circle cx="6" cy="3.500" r="1" fill="#555"/><rect x="7.700" y="9.200" width="5.500" height="4" rx="2" fill="none" stroke="#c8c8c8" stroke-width="1.400"/><rect x="11.300" y="9.200" width="5.500" height="4" rx="2" fill="none" stroke="#c8c8c8" stroke-width="1.400"/></svg>
<span class="pt" style="left:1161px;top:417px;font-style:italic;font-weight:bold;font-size:13px;color:#c4c4c4;letter-spacing:-0.5px">fx</span>
<svg style="left:1167px;top:428px" width="11" height="6" viewBox="0 0 11 6"><rect x="0.700" y="0.700" width="5.500" height="4" rx="2" fill="none" stroke="#c8c8c8" stroke-width="1.400"/><rect x="4.300" y="0.700" width="5.500" height="4" rx="2" fill="none" stroke="#c8c8c8" stroke-width="1.400"/></svg>
<div class="cb" style="left:1245px;top:419px"></div>
<svg style="left:1247px;top:417px" width="14" height="14" viewBox="0 0 14 14"><path d="M1.500 7l3.500 4L12.500 1" fill="none" stroke="#f0f0f0" stroke-width="2"/></svg>
<span class="pt" style="left:1265px;top:419px">传播帧 1</span>
<div class="hl" style="left:1077px;top:439px;width:241px"></div>
<!-- lock row -->
<span class="pt" style="left:1083px;top:446px">锁定:</span>
<svg style="left:1121px;top:448px" width="11" height="11" viewBox="0 0 11 11"><rect width="11" height="11" fill="#8a8a8a"/><path d="M0 0h4v4H0zM7 0h4v4H7zM3.500 3.500h4v4h-4zM0 7h4v4H0zM7 7h4v4H7z" fill="#d4d4d4"/></svg>
<svg style="left:1141px;top:446px" width="16" height="15" viewBox="0 0 16 15"><path d="M15.800 0.300L8.800 9.500 6.500 7.300z" fill="#d0d0d0"/><path d="M6 7.800l2.500 2.500c-1.200 3-4.200 4.200-8.500 4.200 2.500-1.200 3-3.200 6-6.700z" fill="#c8c8c8"/></svg>
<svg style="left:1164px;top:446px" width="14" height="14" viewBox="0 0 14 14"><path d="M7 0l2.500 3h-2v3.500h3.500v-2l3 2.500-3 2.500v-2H7.500V11h2L7 14 4.500 11h2V7.500H3v2L0 7l3-2.500v2h3.500V3h-2z" fill="#c8c8c8"/></svg>
<svg style="left:1187px;top:446px" width="11" height="13" viewBox="0 0 11 13"><path d="M2.500 6V4a3 3 0 0 1 6 0v2" fill="none" stroke="#c8c8c8" stroke-width="1.600"/><rect x="0.500" y="5.500" width="10" height="7" fill="#c8c8c8"/><rect x="4.500" y="7.500" width="2" height="3" fill="#555"/></svg>
<span class="pt" style="left:1223px;top:447px">填充:</span>
<div class="nf" style="left:1257px;top:444px;width:37px;height:20px;line-height:18px;padding-left:3px">100%</div>
<div class="dd2" style="left:1293px;top:444px;width:19px;height:20px;border-radius:0 3px 3px 0"></div>
<svg style="left:1299px;top:452px" width="7" height="4" viewBox="0 0 7 4"><path d="M0 0h7L3.500 4z" fill="#f0f0f0"/></svg>
<div class="a" style="left:1077px;top:467px;width:241px;height:1px;background:#333"></div>
<!-- layer list -->
<div class="a" style="left:1077px;top:468px;width:225px;height:239px;background:#4a4a4a"></div>
<div class="a" style="left:1302px;top:468px;width:16px;height:239px;background:linear-gradient(90deg,#3f3f3f,#484848)"></div>
<div class="lrow" style="top:468px;background:#5c6b80"><div class="eyec"><svg style="left:9px;top:15px" width="13" height="9" viewBox="0 0 13 9"><path d="M0.300 4.500C2.500 1.300 4.500 0.300 6.500 0.300S10.500 1.300 12.700 4.500C10.500 7.700 8.500 8.700 6.500 8.700S2.500 7.700 0.300 4.500z" fill="#bcbcbc"/><circle cx="6.500" cy="4.300" r="2.700" fill="#484848"/><circle cx="5.600" cy="3.300" r="0.900" fill="#9a9a9a"/></svg></div>
  <div class="thumb"></div>
  <svg style="left:32px;top:1px" width="36" height="36" viewBox="0 0 36 36"><path d="M0.500 8V0.500H8M28 0.500h7.500V8M35.500 28v7.500H28M8 35.500H0.500V28" fill="none" stroke="#fff" stroke-width="1"/></svg>
  <div class="a" style="left:36px;top:5px;width:3px;height:5px;border-radius:50%;background:#b08050"></div>
  <span class="pt" style="left:75px;top:13px">图层 1 副本</span></div>
<div class="lrow" style="top:507px"><div class="eyec"><svg style="left:9px;top:15px" width="13" height="9" viewBox="0 0 13 9"><path d="M0.300 4.500C2.500 1.300 4.500 0.300 6.500 0.300S10.500 1.300 12.700 4.500C10.500 7.700 8.500 8.700 6.500 8.700S2.500 7.700 0.300 4.500z" fill="#bcbcbc"/><circle cx="6.500" cy="4.300" r="2.700" fill="#484848"/><circle cx="5.600" cy="3.300" r="0.900" fill="#9a9a9a"/></svg></div>
  <div class="thumb"></div>
  <div class="a" style="left:36px;top:5px;width:3px;height:5px;border-radius:50%;background:#b08050"></div>
  <span class="pt" style="left:75px;top:13px">图层 1</span></div>
<div class="lrow" style="top:546px"><div class="eyec"><svg style="left:9px;top:15px" width="13" height="9" viewBox="0 0 13 9"><path d="M0.300 4.500C2.500 1.300 4.500 0.300 6.500 0.300S10.500 1.300 12.700 4.500C10.500 7.700 8.500 8.700 6.500 8.700S2.500 7.700 0.300 4.500z" fill="#bcbcbc"/><circle cx="6.500" cy="4.300" r="2.700" fill="#484848"/><circle cx="5.600" cy="3.300" r="0.900" fill="#9a9a9a"/></svg></div>
  <div class="thumb" style="background:#023d6e"></div>
  <span class="pt" style="left:78px;top:13px;font-style:italic">背景</span>
  <svg style="left:197px;top:13px" width="11" height="13" viewBox="0 0 11 13"><path d="M2.500 6V4a3 3 0 0 1 6 0v2" fill="none" stroke="#c8c8c8" stroke-width="1.400"/><rect x="0.700" y="5.700" width="9.600" height="6.600" fill="none" stroke="#c8c8c8" stroke-width="1.400"/><rect x="4.500" y="7.500" width="2" height="3" fill="#c8c8c8"/></svg></div>
<div class="a" style="left:1036px;top:707px;width:282px;height:3px;background:#535353;border-top:1px solid #333"></div>


<!-- ===== TIMELINE ===== -->
<div id="timeline" class="a" style="left:0;top:620px;width:1035px;height:90px;background:#4a4a4a"></div>
<div class="a" style="left:0;top:619px;width:1035px;height:2px;background:#323232"></div>
<div class="a" style="left:0;top:621px;width:1035px;height:18px;background:linear-gradient(#3e3e3e,#383838)"></div>
<div class="a" style="left:0;top:639px;width:1035px;height:1px;background:#5a5a5a"></div>
<div class="a" style="left:0;top:621px;width:49px;height:19px;background:#535353;border-right:1px solid #2e2e2e"></div>
<span class="pt" style="left:5px;top:623px;color:#e8e8e8">时间轴</span>
<svg style="left:1016px;top:626px" width="15" height="8" viewBox="0 0 15 8"><path d="M0 2h5.500l-2.750 3.200z" fill="#e0e0e0"/><path d="M6.500 0.500h8M6.500 2.500h8M6.500 4.500h8M6.500 6.500h8" stroke="#e0e0e0" stroke-width="1"/></svg>
<div class="a" style="left:0;top:640px;width:50px;height:66px;background:#5c6b80"></div>
<div class="a" style="left:2px;top:644px;width:45px;height:46px;background:#023d6e;border:1px solid #f0f0f0"></div>
<div class="a" style="left:3px;top:645px;width:14px;height:14px;background:#4f4f4f"></div>
<span class="pt" style="left:7px;top:645px;font-size:11px;font-weight:bold;color:#fff">1</span>
<span class="pt" style="left:15px;top:691px;font-size:11px;color:#f0f0f0">0 秒</span>
<svg style="left:38px;top:696px" width="7" height="4" viewBox="0 0 7 4"><path d="M0 0h7L3.500 4z" fill="#f0f0f0"/></svg>
<div class="a" style="left:0;top:706px;width:1035px;height:4px;background:#3f3f3f"></div>
<div class="a" style="left:28px;top:707px;width:265px;height:3px;background:#585858"></div>
<div class="a" style="left:90px;top:707px;width:1px;height:3px;background:#333"></div>
<div class="a" style="left:206px;top:707px;width:1px;height:3px;background:#333"></div>

<!-- ===== IME BAR ===== -->
<div id="ime" class="a" style="left:443px;top:678px;width:249px;height:27px;background:#fff"></div>
<svg style="left:426px;top:675px" width="30" height="32" viewBox="0 0 30 32">
  <defs><linearGradient id="imeg" x1="0" y1="0" x2="0" y2="1"><stop offset="0" stop-color="#2a78f4"/><stop offset="1" stop-color="#2fa0f8"/></linearGradient></defs>
  <path d="M14.500 1A13.500 13.500 0 0 1 28 14.500 13.500 13.500 0 0 1 14.500 28c-2 0-4-0.400-5.500-1.200L4 30l1.200-5.500A13.500 13.500 0 0 1 1 14.500 13.500 13.500 0 0 1 14.500 1z" fill="url(#imeg)"/>
  <path d="M8 8.500h13M9 14.500h11M7 21h15M14.500 8.500V21" stroke="#fff" stroke-width="2.600" fill="none"/>
</svg>
<svg style="left:461px;top:681px" width="232" height="20" viewBox="0 0 232 20">
  <g fill="none" stroke="#2d6fe0" stroke-width="2" stroke-linecap="round" stroke-linejoin="round">
    <!-- zhong -->
    <path d="M3.500 6.500h11v6.500h-11zM9 2.500v15" stroke-linecap="butt"/>
    <!-- punctuation -->
    <circle cx="28.500" cy="7" r="2" stroke-width="1.600"/><path d="M37.500 12.500c0.500 2-0.500 3.500-2 4.500" stroke-width="2.400"/>
    <!-- smile -->
    <circle cx="54.500" cy="10" r="6.800" stroke-width="1.800"/><path d="M51 12c1.500 2.500 5.500 2.500 7 0" stroke-width="1.600"/>
    <!-- pen -->
    <path d="M71 17.500h14" stroke-width="2"/>
    <!-- cloud -->
    <path d="M119.500 16.500h9.500a3.800 3.800 0 0 0 0.500-7.500 5.500 5.500 0 0 0-10.500-1 4.300 4.300 0 0 0 0.500 8.500z" stroke-width="1.900"/>
  </g>
  <circle cx="52" cy="8" r="1.100" fill="#2d6fe0"/><circle cx="57" cy="8" r="1.100" fill="#2d6fe0"/>
  <path d="M73 14.500l1-3.500 8-8 2.500 2.500-8 8z" fill="#2d6fe0"/>
  <!-- scissors -->
  <g fill="none" stroke="#2d6fe0" stroke-width="2"><circle cx="97" cy="14.500" r="2.200"/><circle cx="105" cy="14.500" r="2.200"/><path d="M98.500 12.500L105.500 4M103.500 12.500L96.500 4" stroke-linecap="round"/></g>
  <!-- keyboard -->
  <rect x="139" y="4" width="17" height="12.500" rx="1.500" fill="#2d6fe0"/>
  <path d="M141 7h2M144.500 7h2M148 7h2M151.500 7h2M141 10h2M144.500 10h2M148 10h2M151.500 10h2M143 13.500h9" stroke="#fff" stroke-width="1.500"/>
  <!-- person (light) -->
  <circle cx="170" cy="6.500" r="3.300" fill="#c3d5f5"/><path d="M163.500 18c0-4.500 2.500-7 6.500-7s6.500 2.500 6.500 7z" fill="#c3d5f5"/>
  <!-- shirt -->
  <path d="M187.500 4l3-1.500c1 1.500 3 1.500 4 0l3 1.500 2.500 4-2.500 1.500-0.800-1V17h-8.400V8.500l-0.800 1L185 8z" fill="#2d6fe0"/>
  <circle cx="199.500" cy="3" r="2.800" fill="#f04438"/>
  <!-- gear -->
  <path d="M216 2.500l1.700 0.700 0.600 2 1.700 1 2-0.500 1.200 1.400-0.800 1.900 0.500 1.900 1.800 1-0.300 1.800-2 0.500-1.200 1.500 0.200 2-1.700 0.800-1.500-1.400h-2l-1.500 1.400-1.700-0.800 0.200-2-1.200-1.500-2-0.500-0.300-1.800 1.800-1 0.500-1.900-0.800-1.900 1.200-1.400 2 0.500 1.700-1 0.600-2z" fill="#2d6fe0"/>
  <circle cx="216" cy="10.500" r="3.200" fill="#fff"/>
</svg>

<!-- floating monitor widget -->
<div class="a" style="left:1171px;top:294px;width:100px;height:42px;border-radius:21px;background:#262b36;box-shadow:0 1px 4px rgba(0,0,0,.5)"></div>
<svg style="left:1230px;top:284px" width="62" height="62" viewBox="0 0 62 62">
  <defs>
    <radialGradient id="wg" cx="0.5" cy="0.45" r="0.55"><stop offset="0" stop-color="#3c4556"/><stop offset="1" stop-color="#2c3340"/></radialGradient>
  </defs>
  <circle cx="31" cy="31" r="29.500" fill="#262b36"/>
  <circle cx="31" cy="31" r="27" fill="url(#wg)"/>
  <path d="M33 5.100A26 26 0 0 1 57 31" fill="none" stroke="#3fc4b4" stroke-width="1.600"/>
  <path d="M57 31A26 26 0 0 1 44 53.500" fill="none" stroke="#7cc77a" stroke-width="1.600"/>
  <path d="M44 53.500A26 26 0 0 1 12 48.500" fill="none" stroke="#e8d84a" stroke-width="1.600"/>
  <path d="M12 48.500A26 26 0 0 1 8.500 18" fill="none" stroke="#f08a4c" stroke-width="1.600"/>
</svg>
<span class="pt" style="left:1243px;top:302px;font-size:24.500px;line-height:26px;color:#fff;letter-spacing:-0.5px;-webkit-text-stroke:0.7px #363e4e;transform:scaleX(1.04);transform-origin:0 0">84</span>
<span class="pt" style="left:1270.500px;top:314px;font-size:10px;color:#fff">%</span>
<svg style="left:1182px;top:299px" width="9" height="10" viewBox="0 0 9 10"><path d="M4.500 1v8M1 4.500L4.500 1 8 4.500" fill="none" stroke="#3ea8e8" stroke-width="1.700"/></svg>
<svg style="left:1182px;top:320px" width="9" height="10" viewBox="0 0 9 10"><path d="M4.500 9V1M1 5.500L4.500 9 8 5.500" fill="none" stroke="#3cc84a" stroke-width="1.700"/></svg>
<span class="pt" style="left:1195px;top:298px;font-size:11px;color:#fff">4.8<span style="font-size:9px;color:#c8ccd4">K/s</span></span>
<span class="pt" style="left:1193px;top:319px;font-size:11px;color:#fff">336<span style="font-size:9px;color:#c8ccd4">K/s</span></span>
<!-- thermometer bar -->
<div class="a" style="left:1307px;top:333px;width:9px;height:65px;border-radius:4.500px;background:#8a8c96"></div>
<div class="a" style="left:1308px;top:334px;width:7px;height:63px;border-radius:3.500px;background:linear-gradient(#2a3050 0,#2a3050 19%,#ff7a52 20%,#fb9a48 50%,#f6d636 100%)"></div>
<div class="a" style="left:1317px;top:62px;width:1px;height:648px;background:#2c2c2c"></div>
</body>
</html>
